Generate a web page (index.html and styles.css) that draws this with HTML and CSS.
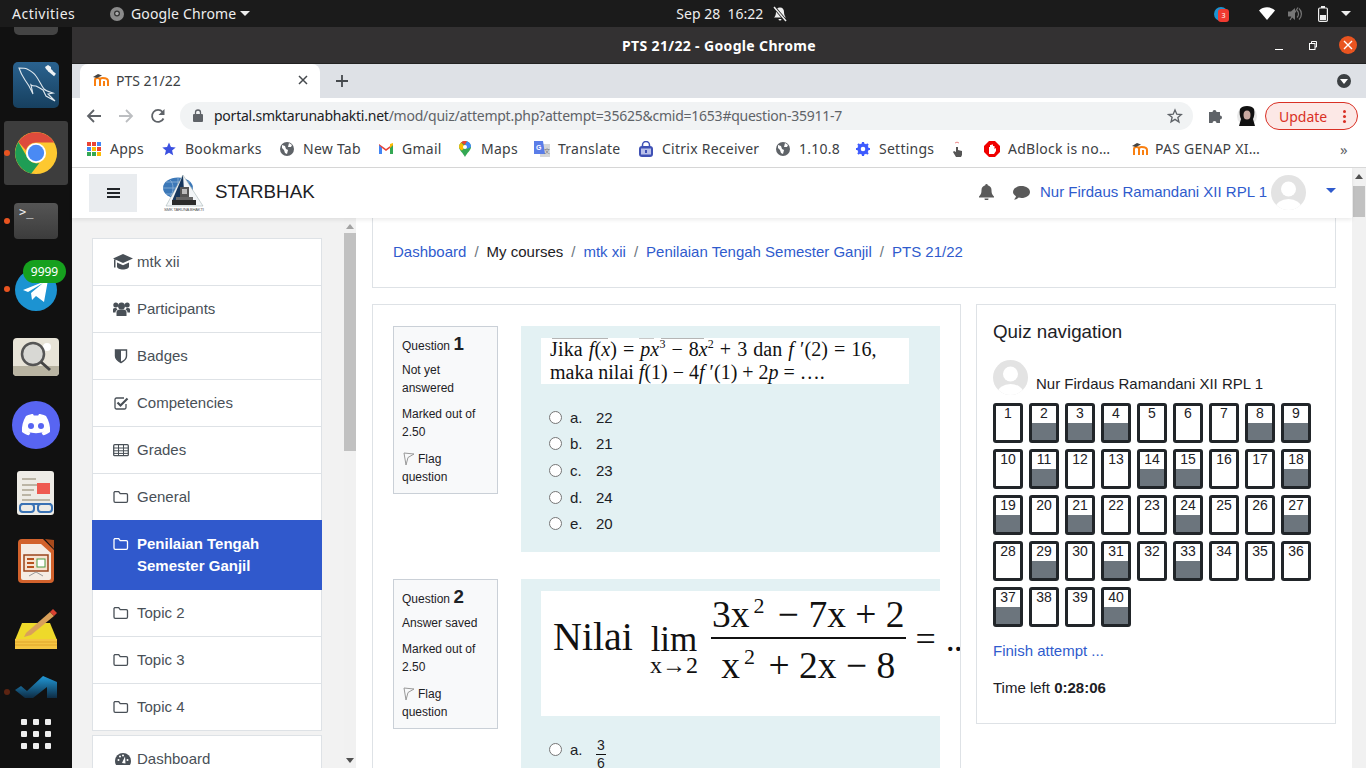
FILE: index.html

```html
<!DOCTYPE html>
<html lang="en">
<head>
    <meta charset="UTF-8">
    <title>PTS 21/22</title>
    <link rel="stylesheet" href="styles.css">
</head>
<body>

    <div class="topbar">
        <span class="activities">Activities</span>
        <span class="appmenu">
            <svg width="14" height="14" viewBox="0 0 14 14"><circle cx="7" cy="7" r="7" fill="#8a8a8a"/><circle cx="7" cy="6.5" r="3" fill="#333"/><circle cx="7" cy="6.5" r="1.7" fill="#aaa"/></svg>
            Google Chrome
            <i class="caret-white"></i>
        </span>
        <span class="clock">Sep 28&nbsp; 16:22</span>
        <svg class="bell-off" width="16" height="16" viewBox="0 0 16 16"><path d="M8 1.500c-2.600 0-4 2-4 4.500 0 3-1 4.500-2 5.500h12c-1-1-2-2.500-2-5.500 0-2.500-1.400-4.500-4-4.500z M6.500 13h3a1.500 1.500 0 0 1-3 0z" fill="#eee"/><path d="M2 1l12 14" stroke="#1b1b1b" stroke-width="3"/><path d="M2 1l12 14" stroke="#eee" stroke-width="1.500"/></svg>
        <div class="tray">
            <span class="tray-badge"><b></b><em>3</em></span>
            <svg class="tray-wifi" width="16" height="13" viewBox="0 0 16 13"><path d="M0 3.500C4.500-.8 11.500-.8 16 3.500L8 13z" fill="#fff"/></svg>
            <svg class="tray-vol" width="15" height="14" viewBox="0 0 15 14"><path d="M0 4.500h3L7 1v12L3 9.500H0z" fill="#777"/><path d="M9 3.500c2 1.800 2 5.200 0 7M11 1.500c3.200 3 3.200 8 0 11" stroke="#777" fill="none" stroke-width="1.200"/><path d="M10 .5L2 13" stroke="#777" stroke-width="1.200"/></svg>
            <svg class="tray-bat" width="10" height="16" viewBox="0 0 10 16"><rect x=".6" y="2" width="8.800" height="13.400" rx="1.200" fill="none" stroke="#eee" stroke-width="1.200"/><rect x="3" y="0" width="4" height="2" fill="#eee"/><rect x="2" y="9" width="6" height="5" fill="#eee"/></svg>
            <i class="caret-white"></i>
        </div>
    </div>

    <div class="desktop">

        <div class="dock">
            <div class="dock-first"><span></span></div>
            <div class="dock-item">
                <svg width="46" height="46" viewBox="0 0 46 46"><defs><linearGradient id="mysqlBg" x1="0" y1="0" x2="0" y2="1"><stop offset="0" stop-color="#2a628f"/><stop offset="1" stop-color="#17405f"/></linearGradient></defs><rect width="46" height="46" rx="5" fill="url(#mysqlBg)"/><path d="M6 6c3 0 6 0 8 1 4 2 7 4 9 7 3 4 5 9 8 13 2 2 6 3 9 4l-5 1 7 7-9-5-3-6c-3-2-5-3-7-4-2 0-4 0-5-1l2 9-4-8-4-6C8 12 7 9 6 6z" fill="none" stroke="#dfe8ee" stroke-width="1.100"/><path d="M36 8l6 5" stroke="#eef2f5" stroke-width="3"/><path d="M32 5l3-2 3 2 0 2 2 2-4 1-3-3z" fill="#eef2f5"/></svg>
            </div>
            <div class="dock-item active">
                <i class="dot"></i>
                <svg width="46" height="46" viewBox="0 0 48 48"><circle cx="24" cy="24" r="22" fill="#fdc830"/><path d="M5.600 12.400A22 22 0 0 1 43 13H24a11 11 0 0 0-10.500 8z" fill="#dd4b3c"/><path d="M5.600 12.400L14.500 28a11 11 0 0 0 13 6.500L19 45.500A22 22 0 0 1 5.600 12.400z" fill="#1f9d55"/><circle cx="24" cy="24" r="10.500" fill="#fff"/><circle cx="24" cy="24" r="8.500" fill="#4a8af4"/></svg>
            </div>
            <div class="dock-item">
                <i class="dot"></i>
                <span class="term">&gt;_</span>
            </div>
            <div class="dock-item">
                <i class="dot"></i>
                <svg class="tele" width="42" height="42" viewBox="0 0 42 42"><circle cx="21" cy="21" r="21" fill="#1c93d2"/><path d="M8 21l25-10-4 22-8-6-4 4-1-7 12-10-15 9z" fill="#fff"/></svg>
                <span class="count">9999</span>
            </div>
            <div class="dock-item">
                <svg width="46" height="38" viewBox="0 0 46 38"><rect width="46" height="38" rx="4" fill="#e8e4d8"/><path d="M0 28h46v6a4 4 0 0 1-4 4H4a4 4 0 0 1-4-4z" fill="#b9b4a2"/><circle cx="34" cy="9" r="4" fill="#fff"/><circle cx="20" cy="16" r="11" fill="#d8d8d4" stroke="#555" stroke-width="2.500"/><path d="M28 24l9 8" stroke="#444" stroke-width="3"/></svg>
            </div>
            <div class="dock-item">
                <svg width="48" height="48" viewBox="0 0 48 48"><circle cx="24" cy="24" r="24" fill="#5865f2"/><path d="M14 15c3-1.500 6-2 7-2l.8 1.500h4.400L27 13c1 0 4 .5 7 2 3 5 4.500 10 4 16-2.500 2-5 3-7 3.300l-1.500-2.500 2.500-1.300c-5 2.300-11 2.300-16 0l2.500 1.300-1.500 2.500c-2-.3-4.500-1.300-7-3.300-.5-6 1-11 4-16z" fill="#fff"/><circle cx="19" cy="25" r="3" fill="#5865f2"/><circle cx="29" cy="25" r="3" fill="#5865f2"/></svg>
            </div>
            <div class="dock-item">
                <svg width="38" height="44" viewBox="0 0 38 44"><rect width="37" height="44" rx="3" fill="#eeece6"/><path d="M5 8h14M5 14h28M5 19h12M5 24h9M5 29h28" stroke="#bbb5a5" stroke-width="2"/><rect x="20" y="12" width="13" height="11" fill="#ee5a50"/><path d="M4 33h30" stroke="#3a72b4" stroke-width="2"/><rect x="3" y="33" width="14" height="8" rx="3" fill="none" stroke="#3a72b4" stroke-width="2"/><rect x="21" y="33" width="14" height="8" rx="3" fill="none" stroke="#3a72b4" stroke-width="2"/></svg>
            </div>
            <div class="dock-item">
                <svg width="38" height="46" viewBox="0 0 38 46"><path d="M5 1h21l11 11v29a4 4 0 0 1-4 4H5a4 4 0 0 1-4-4V5a4 4 0 0 1 4-4z" fill="#d2622c"/><path d="M4 6h20l10 9v25a2 2 0 0 1-2 2H6a2 2 0 0 1-2-2z" fill="#f5ece4"/><path d="M28 1l9 10V2z" fill="#a84a1c"/><rect x="7" y="17" width="24" height="16" fill="#f7e3d2" stroke="#9a451c" stroke-width="1.500"/><path d="M10 21h7M10 25h7M10 29h7" stroke="#b7521f" stroke-width="2"/><rect x="20" y="21" width="8" height="8" fill="#fff" stroke="#4a9a3f"/><path d="M12 38l7-4 7 4" stroke="#999" fill="none"/></svg>
            </div>
            <div class="dock-item">
                <svg width="42" height="40" viewBox="0 0 42 40"><path d="M7 14h28l7 17H0z" fill="#eed92a"/><path d="M0 30h42v10H0z" fill="#f5c542"/><path d="M0 33h42M0 36h42" stroke="#e0a52a"/><path d="M11 24L35 3l4 4-23 19-7 2z" fill="#d9a05a"/><path d="M35 3l3-3 4 4-3 3z" fill="#d94030"/></svg>
            </div>
            <div class="dock-item dock-code">
                <i class="dot dim"></i>
                <svg width="42" height="22" viewBox="0 0 42 22"><defs><linearGradient id="codeBg" x1="0" y1="0" x2="0" y2="1"><stop offset="0" stop-color="#2199d8"/><stop offset="1" stop-color="#0e2c44"/></linearGradient></defs><path d="M0 14l6-4 6 5L28 0l14 6v16H32V11L18 22H10z" fill="url(#codeBg)"/></svg>
            </div>
            <div class="dock-grid">
                <i></i><i></i><i></i><i></i><i></i><i></i><i></i><i></i><i></i>
            </div>
        </div>

        <div class="chrome">
            <div class="titlebar">
                <span class="title-text">PTS 21/22 - Google Chrome</span>
                <div class="window-btns">
                    <i class="win-min"></i>
                    <svg class="win-max" width="8" height="9" viewBox="0 0 8 9"><path d="M2.500 2V.5h5v5.500H6" fill="none" stroke="#fff"/><rect x=".5" y="2.500" width="5.500" height="6" fill="none" stroke="#fff"/></svg>
                    <span class="win-close">
                        <svg width="10" height="10" viewBox="0 0 10 10"><path d="M1 1l8 8M9 1l-8 8" stroke="#fff" stroke-width="1.400"/></svg>
                    </span>
                </div>
            </div>

            <div class="tabstrip">
                <div class="tab">
                    <svg class="moodle-m" width="16" height="14" viewBox="0 0 16 14"><path d="M2 13V7c0-1.500 1-2 2.500-2S7 5.500 7 7v6M7 7c0-1.500 1-2 2.500-2S15 5 15 8v5M11 8v5" fill="none" stroke="#f98012" stroke-width="2"/><path d="M0 4l5-3 4 1.500L4 5z" fill="#444"/></svg>
                    <span class="tab-title">PTS 21/22</span>
                    <svg class="tab-x" width="10" height="10" viewBox="0 0 10 10"><path d="M1 1l8 8M9 1l-8 8" stroke="#45494d" stroke-width="1.500"/></svg>
                </div>
                <svg class="tab-plus" width="12" height="12" viewBox="0 0 12 12"><path d="M6 0v12M0 6h12" stroke="#45494d" stroke-width="1.800"/></svg>
                <span class="tab-search"><i></i></span>
            </div>

            <div class="toolbar">
                <svg class="tool" width="16" height="16" viewBox="0 0 16 16"><path d="M15 8H2M8 2L2 8l6 6" fill="none" stroke="#5f6368" stroke-width="1.800"/></svg>
                <svg class="tool" width="16" height="16" viewBox="0 0 16 16"><path d="M1 8h13M8 2l6 6-6 6" fill="none" stroke="#bcbec1" stroke-width="1.800"/></svg>
                <svg class="tool" width="16" height="16" viewBox="0 0 16 16"><path d="M13.500 10.500A6 6 0 1 1 12.600 4" fill="none" stroke="#5f6368" stroke-width="1.800"/><path d="M14.500 1v6h-6z" fill="#5f6368"/></svg>
                <div class="omnibox">
                    <svg width="10" height="13" viewBox="0 0 10 13"><rect y="5" width="10" height="8" rx="1" fill="#5f6368"/><path d="M2.500 5V3.500a2.500 2.500 0 0 1 5 0V5" fill="none" stroke="#5f6368" stroke-width="1.300"/></svg>
                    <span class="url"><b>portal.smktarunabhakti.net</b>/mod/quiz/attempt.php?attempt=35625&amp;cmid=1653#question-35911-7</span>
                    <svg class="url-star" width="16" height="16" viewBox="0 0 24 24"><path d="M12 3l2.700 6.300 6.800.6-5.200 4.500 1.600 6.700L12 17l-5.900 3.600 1.600-6.700L2.500 9.900l6.800-.6z" fill="none" stroke="#5f6368" stroke-width="2"/></svg>
                </div>
                <svg class="puzzle" width="16" height="16" viewBox="0 0 16 16"><path d="M1 5h3.500a2 2 0 0 1 4 0H12v3.500a2 2 0 0 1 0 4V16H8.500a2 2 0 0 0-4 0H1z" transform="translate(0 -1)" fill="#5f6368"/></svg>
                <svg class="profile" width="20" height="22" viewBox="0 0 20 22"><circle cx="10" cy="11" r="10" fill="#e8e8e8"/><path d="M3 4c2-4 12-4 14 0 1 4 0 8-1 10l2 7H2l2-7C3 12 2 8 3 4z" fill="#111"/><ellipse cx="10" cy="10" rx="3.500" ry="4.500" fill="#c9a9a0"/></svg>
                <span class="update">Update<i class="dots"></i></span>
            </div>

            <div class="bookmarks">
                <span class="bm bm-apps">
                    <svg width="14" height="14" viewBox="0 0 14 14"><rect width="4" height="4" fill="#ea4335"/><rect x="5" width="4" height="4" fill="#ea4335"/><rect x="10" width="4" height="4" fill="#4285f4"/><rect y="5" width="4" height="4" fill="#4285f4"/><rect x="5" y="5" width="4" height="4" fill="#fbbc04"/><rect x="10" y="5" width="4" height="4" fill="#ea4335"/><rect y="10" width="4" height="4" fill="#34a853"/><rect x="5" y="10" width="4" height="4" fill="#34a853"/><rect x="10" y="10" width="4" height="4" fill="#fbbc04"/></svg>
                    Apps
                </span>
                <span class="bm bm-book">
                    <svg width="14" height="14" viewBox="0 0 24 24"><path d="M12 1l3.300 7.500 8.200.8-6.200 5.400 1.900 8L12 18.500 4.800 22.700l1.900-8L.5 9.300l8.200-.8z" fill="#3b50e0"/></svg>
                    Bookmarks
                </span>
                <span class="bm bm-newtab">
                    <svg width="14" height="14" viewBox="0 0 14 14"><circle cx="7" cy="7" r="7" fill="#5f6368"/><path d="M2 3l3 1 1 3 2 1-1 4-2-1-1-3-2-2zM9 1l3 2-1 2H8z" fill="#fff"/></svg>
                    New Tab
                </span>
                <span class="bm bm-gmail">
                    <svg width="14" height="11" viewBox="0 0 14 11"><path d="M0 11V1l7 5 7-5v10h-3V5L7 8 3 5v6z" fill="#ea4335"/><path d="M0 11V2l3 3v6z" fill="#4285f4"/><path d="M14 11V2l-3 3v6z" fill="#34a853"/><path d="M11 1l3-1v2l-3 3z" fill="#fbbc04"/></svg>
                    Gmail
                </span>
                <span class="bm bm-maps">
                    <svg width="12" height="16" viewBox="0 0 12 16"><path d="M6 16C4 12 0 9 0 6a6 6 0 0 1 12 0c0 3-4 6-6 10z" fill="#34a853"/><path d="M0 6a6 6 0 0 1 2-4.500L6 6 3 9.500C1 8.500 0 7 0 6z" fill="#fbbc04"/><path d="M2 1.500A6 6 0 0 1 8 .300L6 4z" fill="#ea4335"/><path d="M8 .300A6 6 0 0 1 12 6L8 8 6 4z" fill="#4285f4"/><circle cx="6" cy="6" r="2" fill="#fff"/></svg>
                    Maps
                </span>
                <span class="bm bm-translate">
                    <svg width="16" height="16" viewBox="0 0 16 16"><rect x="6" y="3" width="10" height="13" fill="#d5d6d8"/><path d="M0 0h9l2 13H0z" fill="#5a7de8"/><text x="2" y="9" font-size="7" fill="#fff" font-family="Liberation Sans" font-weight="700">G</text><text x="10" y="12" font-size="6" fill="#777" font-family="Noto Sans CJK SC">文</text></svg>
                    Translate
                </span>
                <span class="bm bm-citrix">
                    <svg width="14" height="16" viewBox="0 0 14 16"><rect y="5" width="14" height="11" rx="3" fill="#3f51b5"/><path d="M3.500 6V4a3.500 3.500 0 0 1 7 0v2" fill="none" stroke="#3f51b5" stroke-width="1.500"/><rect x="2" y="7.500" width="10" height="6" fill="#b9c0ea"/><rect x="6" y="9" width="2" height="3" fill="#3f51b5"/></svg>
                    Citrix Receiver
                </span>
                <span class="bm bm-ver">
                    <svg width="14" height="14" viewBox="0 0 14 14"><circle cx="7" cy="7" r="7" fill="#5f6368"/><path d="M2 3l3 1 1 3 2 1-1 4-2-1-1-3-2-2zM9 1l3 2-1 2H8z" fill="#fff"/></svg>
                    1.10.8
                </span>
                <span class="bm bm-settings">
                    <svg width="14" height="14" viewBox="0 0 14 14"><circle cx="7" cy="7" r="4" fill="none" stroke="#3d5afe" stroke-width="3.400"/><path d="M7 0v3M7 11v3M0 7h3M11 7h3M2 2l2 2M10 10l2 2M12 2l-2 2M4 10l-2 2" stroke="#3d5afe" stroke-width="2.200"/></svg>
                    Settings
                </span>
                <span class="bm bm-touch">
                    <svg width="10" height="16" viewBox="0 0 10 16"><path d="M3 6h2v3l4 1v4l-1 2H3L0 11l1-1 2 1z" fill="#555"/><path d="M2 2a3 3 0 0 1 4 0" stroke="#e88" fill="none"/></svg>
                </span>
                <span class="bm bm-adblock">
                    <svg width="16" height="16" viewBox="0 0 16 16"><path d="M5 0h6l5 5v6l-5 5H5l-5-5V5z" fill="#f00000"/><path d="M5 13V6l1 0V4h1.500v-.5H9V5h1.500v3L12 7v3l-2 3z" fill="#fff"/></svg>
                    AdBlock is no…
                </span>
                <span class="bm bm-pas">
                    <svg class="moodle-m" width="16" height="14" viewBox="0 0 16 14"><path d="M2 13V7c0-1.500 1-2 2.500-2S7 5.500 7 7v6M7 7c0-1.500 1-2 2.500-2S15 5 15 8v5M11 8v5" fill="none" stroke="#f98012" stroke-width="2"/><path d="M0 4l5-3 4 1.500L4 5z" fill="#444"/></svg>
                    PAS GENAP XI…
                </span>
                <span class="bm-more">»</span>
            </div>

            <div class="page">
                <div class="page-view">
                    <nav class="navbar">
                        <span class="burger"><i></i></span>
                        <svg class="logo" width="42" height="38" viewBox="0 0 42 38"><ellipse cx="15" cy="14" rx="15" ry="10.500" fill="#3c78b8"/><path d="M7 6c4 3 4 13 0 16M15 4v20M23 6c-4 3-4 13 0 16M0 14h30M3 8h24M3 20h24" stroke="#a9c6e2" stroke-width=".6" fill="none"/><path d="M20 1L40 32H3z" fill="#f2f5f7" stroke="#9aa" stroke-width=".5"/><path d="M20 1L9 27h7l5-10z" fill="#16365c"/><rect x="17" y="13" width="9" height="10" fill="#555"/><rect x="19" y="15" width="5" height="5" fill="#bbb"/><rect x="13" y="23" width="17" height="3" fill="#666"/><rect x="9" y="26" width="24" height="5" fill="#2b2b2b"/><text x="1" y="36.500" font-size="4.200" fill="#555" font-family="Liberation Sans" textLength="40">SMK TARUNA BHAKTI</text></svg>
                        <span class="brand">STARBHAK</span>
                        <svg class="nav-bell" width="15" height="16" viewBox="0 0 15 16"><path d="M7.500 0a1.200 1.200 0 0 1 1.200 1.300C11 1.800 12.500 3.800 12.500 6c0 4 1.200 5 2.500 6.500V13.500H0V12.500C1.300 11 2.500 10 2.500 6c0-2.200 1.500-4.200 3.800-4.700A1.200 1.200 0 0 1 7.500 0zM5.500 14.500h4a2 2 0 0 1-4 0z" fill="#5a5a5a"/></svg>
                        <svg class="nav-chat" width="17" height="15" viewBox="0 0 17 15"><path d="M8.500 1C13 1 17 3.500 17 7s-4 6-8.500 6c-1 0-2-.1-2.800-.4C4.500 13.700 3 14.500 1 14.500c1-1 1.800-2.200 2-3.300C1.200 10 0 8.600 0 7c0-3.500 4-6 8.500-6z" fill="#5a5a5a"/></svg>
                        <a class="nav-user">Nur Firdaus Ramandani XII RPL 1</a>
                        <svg class="avatar" width="35" height="35" viewBox="0 0 35 35"><defs><clipPath id="avA"><circle cx="17.500" cy="17.500" r="17.500"/></clipPath></defs><circle cx="17.500" cy="17.500" r="17.500" fill="#e3e3e3"/><g clip-path="url(#avA)" fill="#fff"><circle cx="17.500" cy="14" r="7.500"/><ellipse cx="17.500" cy="33" rx="13" ry="9"/></g></svg>
                        <i class="nav-caret"></i>
                    </nav>

                    <div class="layout">
                        <aside class="sidebar">
                            <div class="side-scroll">
                                <ul class="side-list">
                                    <li>
                                        <svg class="ico" width="20" height="16" viewBox="0 0 20 16"><path d="M10 0L0 4.500 10 9l10-4.500zM4 8.500v4c0 2 3 3 6 3s6-1 6-3v-4l-6 2.700zM1 5.500v8h1.500v-8z" fill="#495057"/></svg>
                                        mtk xii
                                    </li>
                                    <li>
                                        <svg class="ico" width="17" height="16" viewBox="0 0 17 16"><circle cx="8.500" cy="5" r="3.500" fill="#495057"/><circle cx="2.800" cy="4" r="2.500" fill="#495057"/><circle cx="14.200" cy="4" r="2.500" fill="#495057"/><path d="M3.500 15V11c0-2 2-2.500 5-2.500s5 .5 5 2.500v4zM0 11.500V8.500c0-1 1-1.800 3.500-1.800 0 1 .5 1.500 1 2-1.500.5-2 1.500-2 2.800zM17 11.500V8.500c0-1-1-1.800-3.500-1.800 0 1-.5 1.500-1 2 1.500.5 2 1.500 2 2.800z" fill="#495057"/></svg>
                                        Participants
                                    </li>
                                    <li>
                                        <svg class="ico" width="16" height="16" viewBox="0 0 16 16"><path d="M2.500 2h11v6c0 3-2.500 5-5.500 6.500C5 13 2.500 11 2.500 8z" fill="none" stroke="#495057" stroke-width="1.400"/><path d="M2.500 2H8v12.500C5 13 2.500 11 2.500 8z" fill="#495057"/></svg>
                                        Badges
                                    </li>
                                    <li>
                                        <svg class="ico" width="16" height="16" viewBox="0 0 16 16"><path d="M13 9v3.500a1.500 1.500 0 0 1-1.500 1.500h-8A1.500 1.500 0 0 1 2 12.500v-8A1.500 1.500 0 0 1 3.500 3H11" fill="none" stroke="#495057" stroke-width="1.300"/><path d="M4.500 7.500L7.500 10.500 14.500 3.500" fill="none" stroke="#495057" stroke-width="2.200"/></svg>
                                        Competencies
                                    </li>
                                    <li>
                                        <svg class="ico" width="16" height="16" viewBox="0 0 16 16"><rect x=".7" y="2.700" width="14.600" height="11" rx="1" fill="none" stroke="#495057" stroke-width="1.300"/><path d="M1 6h14M1 8.800h14M1 11.400h14M5.500 3v10.500M10.500 3v10.500" stroke="#495057"/></svg>
                                        Grades
                                    </li>
                                    <li>
                                        <svg class="ico" width="16" height="16" viewBox="0 0 16 16"><use href="#folder"/></svg>
                                        General
                                    </li>
                                    <li class="active">
                                        <svg class="ico" width="16" height="16" viewBox="0 0 16 16"><use href="#folder"/></svg>
                                        <span>Penilaian Tengah Semester Ganjil</span>
                                    </li>
                                    <li>
                                        <svg class="ico" width="16" height="16" viewBox="0 0 16 16"><use href="#folder"/></svg>
                                        Topic 2
                                    </li>
                                    <li>
                                        <svg class="ico" width="16" height="16" viewBox="0 0 16 16"><use href="#folder"/></svg>
                                        Topic 3
                                    </li>
                                    <li>
                                        <svg class="ico" width="16" height="16" viewBox="0 0 16 16"><use href="#folder"/></svg>
                                        Topic 4
                                    </li>
                                </ul>
                                <ul class="side-list">
                                    <li>
                                        <svg class="ico" width="16" height="16" viewBox="0 0 16 16"><path d="M8 2a8 8 0 0 0-8 8c0 1.500.4 3 1.100 4h13.800c.7-1 1.100-2.500 1.100-4a8 8 0 0 0-8-8z" fill="#495057"/><circle cx="3.500" cy="9" r="1" fill="#fff"/><circle cx="5" cy="5.500" r="1" fill="#fff"/><circle cx="8" cy="4.500" r="1" fill="#fff"/><circle cx="12.500" cy="9" r="1" fill="#fff"/><path d="M7 12l3-6.500 .5 7z" fill="#fff"/></svg>
                                        Dashboard
                                    </li>
                                </ul>
                            </div>
                            <div class="scrollbar side-bar">
                                <i class="arrow-up"></i>
                                <span class="thumb"></span>
                                <i class="arrow-down"></i>
                            </div>
                        </aside>

                        <main class="main">
                            <div class="breadcrumb-card">
                                <a>Dashboard</a><span class="sep">/</span><span>My courses</span><span class="sep">/</span><a>mtk xii</a><span class="sep">/</span><a>Penilaian Tengah Semester Ganjil</a><span class="sep">/</span><a>PTS 21/22</a>
                            </div>
                            <div class="columns">
                                <section class="quiz-card">
                                    <div class="que">
                                        <div class="que-info">
                                            <h3>Question <b>1</b></h3>
                                            <p>Not yet answered</p>
                                            <p>Marked out of 2.50</p>
                                            <p><svg class="flag" width="12" height="14" viewBox="0 0 12 14"><path d="M2 1l10 1-6 3.500L4 13z" fill="none" stroke="#999"/></svg>Flag question</p>
                                        </div>
                                        <div class="que-body">
                                            <div class="scan scan-one">
                                                <div class="line-wide">Jika <i>f</i>(<i>x</i>) = <i>px</i><sup>3</sup> − 8<i>x</i><sup>2</sup> + 3 dan <i>f</i> ′(2) = 16,</div>
                                                <div>maka nilai <i>f</i>(1) − 4<i>f</i> ′(1) + 2<i>p</i> = ….</div>
                                            </div>
                                            <label class="opt"><i class="radio"></i><span class="letter">a.</span>22</label>
                                            <label class="opt"><i class="radio"></i><span class="letter">b.</span>21</label>
                                            <label class="opt"><i class="radio"></i><span class="letter">c.</span>23</label>
                                            <label class="opt"><i class="radio"></i><span class="letter">d.</span>24</label>
                                            <label class="opt"><i class="radio"></i><span class="letter">e.</span>20</label>
                                        </div>
                                    </div>
                                    <div class="que">
                                        <div class="que-info">
                                            <h3>Question <b>2</b></h3>
                                            <p>Answer saved</p>
                                            <p>Marked out of 2.50</p>
                                            <p><svg class="flag" width="12" height="14" viewBox="0 0 12 14"><path d="M2 1l10 1-6 3.500L4 13z" fill="none" stroke="#999"/></svg>Flag question</p>
                                        </div>
                                        <div class="que-body">
                                            <div class="scan scan-two">
                                                <span class="nilai">Nilai</span>
                                                <span class="lim">lim<small>x→2</small></span>
                                                <span class="frac">
                                                    <span class="num">3x<sup>2</sup> − 7x + 2</span>
                                                    <span class="den">x<sup>2</sup> + 2x − 8</span>
                                                </span>
                                                <span class="eq">=<span class="eq-dots">..</span></span>
                                            </div>
                                            <label class="opt"><i class="radio"></i><span class="letter">a.</span><span class="small-frac"><span>3</span><span>6</span></span></label>
                                        </div>
                                    </div>
                                </section>

                                <section class="nav-card">
                                    <h4>Quiz navigation</h4>
                                    <div class="nav-person">
                                        <svg class="avatar" width="35" height="35" viewBox="0 0 35 35"><defs><clipPath id="avB"><circle cx="17.500" cy="17.500" r="17.500"/></clipPath></defs><circle cx="17.500" cy="17.500" r="17.500" fill="#e3e3e3"/><g clip-path="url(#avB)" fill="#fff"><circle cx="17.500" cy="14" r="7.500"/><ellipse cx="17.500" cy="33" rx="13" ry="9"/></g></svg>
                                        <span>Nur Firdaus Ramandani XII RPL 1</span>
                                    </div>
                                    <div class="qn-grid">
                                        <a class="qn">1</a><a class="qn done">2</a><a class="qn done">3</a><a class="qn done">4</a><a class="qn">5</a><a class="qn">6</a><a class="qn">7</a><a class="qn done">8</a><a class="qn done">9</a>
                                        <a class="qn">10</a><a class="qn done">11</a><a class="qn">12</a><a class="qn">13</a><a class="qn done">14</a><a class="qn done">15</a><a class="qn">16</a><a class="qn">17</a><a class="qn done">18</a>
                                        <a class="qn done">19</a><a class="qn">20</a><a class="qn done">21</a><a class="qn">22</a><a class="qn">23</a><a class="qn done">24</a><a class="qn">25</a><a class="qn">26</a><a class="qn done">27</a>
                                        <a class="qn">28</a><a class="qn done">29</a><a class="qn">30</a><a class="qn done">31</a><a class="qn">32</a><a class="qn done">33</a><a class="qn">34</a><a class="qn">35</a><a class="qn">36</a>
                                        <a class="qn done">37</a><a class="qn">38</a><a class="qn">39</a><a class="qn done">40</a>
                                    </div>
                                    <a class="finish">Finish attempt ...</a>
                                    <div class="time-left">Time left <b>0:28:06</b></div>
                                </section>
                            </div>
                        </main>
                    </div>
                </div>
                <div class="scrollbar page-bar">
                    <i class="arrow-up"></i>
                    <span class="thumb"></span>
                </div>
            </div>
        </div>
    </div>

    <svg width="0" height="0" class="defs">
        <symbol id="folder" viewBox="0 0 16 16">
            <path d="M1.700 2.700h4l1.500 2h6.100a1.200 1.200 0 0 1 1.200 1.200v6.200a1.200 1.200 0 0 1-1.200 1.200H2.200A1.200 1.200 0 0 1 1 12.100V3.400z" fill="none" stroke="currentColor" stroke-width="1.300"/>
        </symbol>
    </svg>

</body>
</html>
```

FILE: styles.css

```css
* { box-sizing: border-box; }
html, body { height: 100%; }
body {
    margin: 0;
    width: 1366px;
    height: 768px;
    overflow: hidden;
    display: flex;
    flex-direction: column;
    background: #111;
    font-family: "Liberation Sans", Arial, sans-serif;
    font-size: 15px;
    color: #1d2125;
}
svg { display: block; flex: none; }
.defs { position: absolute; }

/* ubuntu top bar */
.topbar {
    height: 27px;
    flex: none;
    display: flex;
    align-items: center;
    background: #1b1b1b;
    color: #eee;
    font-family: "Noto Sans", sans-serif;
    font-size: 14px;
    position: relative;
}
.activities { margin-left: 12px; width: 98px; letter-spacing: .5px; }
.appmenu { display: flex; align-items: center; gap: 7px; letter-spacing: .15px; }
.caret-white {
    display: inline-block;
    border: 5px solid transparent;
    border-top: 5px solid #eee;
    border-bottom: 0;
}
.appmenu .caret-white { margin-left: -3px; }
.clock { margin-left: 426px; }
.bell-off { margin-left: 9px; }
.tray { margin-left: auto; display: flex; align-items: center; padding-right: 15px; }
.tray-badge { position: relative; width: 14px; height: 14px; border-radius: 50%; background: #1c93d2; margin-right: 31px; }
.tray-badge em {
    position: absolute;
    left: 4px;
    top: 2px;
    width: 11px;
    height: 13px;
    border-radius: 3px;
    background: #f03a30;
    color: #fff;
    font-size: 7px;
    font-style: normal;
    line-height: 13px;
    text-align: center;
}
.tray-wifi { margin-right: 13px; }
.tray-vol { margin-right: 15px; }
.tray-bat { margin-right: 13px; }

/* dock */
.desktop { flex: 1; display: flex; min-height: 0; }
.dock {
    width: 72px;
    flex: none;
    background: #111;
    display: flex;
    flex-direction: column;
    overflow: hidden;
}
.dock-first { height: 24px; flex: none; overflow: hidden; position: relative; }
.dock-first span {
    position: absolute;
    left: 14px;
    top: -20px;
    width: 44px;
    height: 28px;
    border-radius: 5px;
    background: #444;
}
.dock-item {
    height: 68px;
    flex: none;
    display: flex;
    align-items: center;
    justify-content: center;
    position: relative;
}
.dock-item.active::before {
    content: "";
    position: absolute;
    left: 4px;
    right: 4px;
    top: 2px;
    bottom: 2px;
    border-radius: 3px;
    background: #3d3d3d;
}
.dock-item svg { position: relative; }
.dock-code { margin-top: -5px; }
.dock-code svg { margin-top: -10px; }
.dot {
    position: absolute;
    left: 4px;
    top: 31px;
    width: 6px;
    height: 6px;
    border-radius: 50%;
    background: #e95420;
}
.dot.dim { background: #5c2412; }
.term {
    width: 44px;
    height: 36px;
    border-radius: 4px;
    background: linear-gradient(#555, #3c3c3c);
    color: #eee;
    font-family: "DejaVu Sans Mono", monospace;
    font-size: 12px;
    padding: 2px 0 0 5px;
}
.count {
    position: absolute;
    left: 23px;
    top: 5px;
    height: 23px;
    width: 43px;
    border-radius: 12px;
    background: #16a01e;
    color: #fff;
    font-family: "Noto Sans", sans-serif;
    font-size: 12px;
    line-height: 23px;
    text-align: center;
}
.tele { margin-top: 2px; }
.dock-grid {
    margin: -7px auto 0;
    width: 30px;
    display: grid;
    grid-template-columns: repeat(3, 6px);
    gap: 6px;
}
.dock-grid i { width: 6px; height: 6px; border-radius: 1px; background: #eee; }

/* chrome frame */
.chrome { flex: 1; display: flex; flex-direction: column; min-width: 0; background: #fff; }
.titlebar {
    height: 37px;
    flex: none;
    position: relative;
    background: #333132;
    border-bottom: 1px solid #222;
    color: #fff;
    font-family: "Noto Sans", sans-serif;
    font-size: 14px;
    font-weight: 700;
    letter-spacing: .35px;
    text-align: center;
    line-height: 37px;
}
.window-btns { position: absolute; right: 9px; top: 9px; display: flex; align-items: center; }
.win-min { width: 8px; height: 1px; background: #fff; margin-right: 26px; margin-top: 9px; }
.win-max { margin-right: 22px; }
.win-close {
    width: 18px;
    height: 18px;
    border-radius: 50%;
    background: #e95420;
    display: flex;
    align-items: center;
    justify-content: center;
}
.tabstrip {
    height: 34px;
    flex: none;
    display: flex;
    align-items: center;
    background: #dee1e6;
    padding-left: 8px;
}
.tab {
    width: 240px;
    height: 34px;
    background: #fff;
    border-radius: 8px 8px 0 0;
    display: flex;
    align-items: center;
    padding: 0 12px 2px 13px;
    font-family: "Noto Sans", sans-serif;
    font-size: 14px;
    color: #3c4043;
}
.tab-title { margin-left: 7px; }
.tab-x { margin-left: auto; margin-right: 0; }
.tab-plus { margin-left: 16px; }
.tab-search {
    margin-left: auto;
    margin-right: 15px;
    width: 14px;
    height: 14px;
    border-radius: 50%;
    background: #3c4043;
    display: flex;
    align-items: center;
    justify-content: center;
}
.tab-search i { border: 4px solid transparent; border-top: 5px solid #fff; border-bottom: 0; }

.toolbar {
    height: 35px;
    flex: none;
    display: flex;
    align-items: center;
    padding-left: 14px;
    background: #fff;
}
.tool { margin-right: 16px; }
.omnibox {
    width: 1013px;
    height: 28px;
    margin-left: -2px;
    border-radius: 14px;
    background: #f1f3f4;
    display: flex;
    align-items: center;
    padding: 0 10px 0 13px;
    font-family: "Noto Sans", sans-serif;
    font-size: 14px;
    letter-spacing: -.24px;
}
.url { margin-left: 11px; color: #5f6368; white-space: nowrap; }
.url b { font-weight: 400; color: #202124; }
.url-star { margin-left: auto; }
.puzzle { margin-left: 15px; }
.profile { margin-left: 13px; }
.update {
    margin-left: 8px;
    width: 93px;
    height: 28px;
    border: 1px solid #d93025;
    border-radius: 14px;
    background: #fce8e6;
    color: #d93025;
    font-family: "Noto Sans", sans-serif;
    font-size: 14px;
    line-height: 27px;
    padding-left: 13px;
    position: relative;
}
.dots {
    position: absolute;
    right: 11px;
    top: 7px;
    width: 3px;
    height: 3px;
    border-radius: 50%;
    background: #d93025;
    box-shadow: 0 5px 0 #d93025, 0 10px 0 #d93025;
}
.bookmarks {
    height: 35px;
    flex: none;
    display: flex;
    align-items: center;
    background: #fff;
    border-bottom: 1px solid #d8d8d8;
    padding: 0 0 3px 15px;
    font-family: "Noto Sans", sans-serif;
    font-size: 14px;
    letter-spacing: .25px;
    color: #3c4043;
    white-space: nowrap;
}
.bm { display: flex; align-items: center; gap: 9px; flex: none; }
.bm-apps { width: 75px; }
.bm-book { width: 118px; }
.bm-newtab { width: 99px; }
.bm-gmail { width: 80px; }
.bm-maps { width: 75px; gap: 10px; }
.bm-translate { width: 105px; gap: 8px; }
.bm-citrix { width: 137px; }
.bm-ver { width: 80px; }
.bm-settings { width: 97px; }
.bm-touch { width: 31px; }
.bm-adblock { width: 148px; gap: 8px; }
.bm-pas { gap: 7px; }
.bm-more { margin-left: 80px; font-size: 15px; color: #5f6368; }

/* the web page */
.page { flex: 1; min-height: 0; display: flex; background: #fff; }
.page-view { flex: 1; min-width: 0; display: flex; flex-direction: column; }
.scrollbar { background: #f1f1f1; position: relative; flex: none; }
.thumb { position: absolute; left: 0; right: 0; background: #c1c1c1; }
.arrow-up, .arrow-down { position: absolute; border: 4px solid transparent; }
.arrow-up { border-bottom: 5px solid #a3a3a3; border-top: 0; }
.arrow-down { border-top: 5px solid #505050; border-bottom: 0; }
.page-bar { width: 14px; }
.page-bar .thumb { top: 18px; height: 31px; left: 1px; right: 1px; }
.page-bar .arrow-up { left: 3px; top: 6px; border-bottom-color: #505050; }

.navbar {
    height: 50px;
    flex: none;
    display: flex;
    align-items: center;
    background: #fff;
    box-shadow: 0 2px 4px rgba(0, 0, 0, 0.08);
    position: relative;
    z-index: 2;
}
.burger {
    margin-left: 17px;
    width: 48px;
    height: 38px;
    background: #e9ecef;
    display: flex;
    align-items: center;
    justify-content: center;
}
.burger i {
    width: 13px;
    height: 2px;
    background: #212529;
    box-shadow: 0 4px 0 #212529, 0 -4px 0 #212529;
}
.logo { margin-left: 26px; }
.brand { margin: 0 0 2px 10px; font-size: 18.75px; color: #1d2125; }
.nav-bell { margin-left: auto; margin-bottom: 2px; }
.nav-chat { margin-left: 19px; margin-bottom: 2px; }
.nav-user { margin: 0 0 3px 10px; color: #2f5bcd; white-space: nowrap; }
.nav-user + .avatar { margin-left: 4px; margin-bottom: 2px; }
.nav-caret {
    margin-left: 20px;
    margin-right: 16px;
    margin-bottom: 5px;
    border: 5px solid transparent;
    border-top: 5px solid #2f5bcd;
    border-bottom: 0;
}
.layout { flex: 1; min-height: 0; display: flex; overflow: hidden; }

/* course index */
.sidebar { width: 284px; flex: none; display: flex; background: #f2f2f2; }
.side-scroll { flex: 1; padding: 20px 22px 0 20px; overflow: hidden; }
.side-bar { width: 12px; }
.side-bar .thumb { top: 15px; height: 218px; }
.side-bar .arrow-up { left: 2px; top: 6px; }
.side-bar .arrow-down { left: 2px; bottom: 5px; }
.side-list {
    list-style: none;
    margin: 0 0 4px;
    padding: 0;
    background: #fff;
    border: 1px solid #dee2e6;
    border-bottom: 0;
    color: #495057;
}
.side-list li {
    display: flex;
    padding: 12px 20px;
    line-height: 22px;
    border-bottom: 1px solid #dee2e6;
}
.side-list .ico { margin: 3px 8px 0 0; width: 16px; color: #495057; }
.side-list li:first-child .ico { margin-left: 0; margin-right: 4px; width: 20px; }
.side-list li:nth-child(2) .ico { margin-right: 7px; width: 17px; }
.side-list li.active {
    background: #3059cc;
    color: #fff;
    font-weight: 700;
    margin: -1px -1px 0;
    padding: 13px 20px 12px 21px;
    border-bottom-color: #3059cc;
}
.side-list li.active .ico { color: #fff; }

/* main column */
.main { flex: 1; min-width: 0; padding: 0 16px; }
.breadcrumb-card {
    height: 70px;
    border: 1px solid #dee2e6;
    border-top: 0;
    padding: 23px 20px 0;
    line-height: 22px;
    white-space: nowrap;
}
.breadcrumb-card a { color: #2f5bcd; }
.breadcrumb-card .sep { color: #6c757d; margin: 0 8px; }
.columns { display: flex; gap: 15px; margin-top: 16px; align-items: flex-start; }
.quiz-card {
    width: 589px;
    flex: none;
    height: 480px;
    border: 1px solid #dee2e6;
    padding: 21px 0 0 20px;
    overflow: hidden;
}
.que { display: flex; gap: 23px; align-items: flex-start; margin-bottom: 27px; }
.que-info {
    width: 105px;
    flex: none;
    background: #f8f9fa;
    border: 1px solid #cad0d7;
    padding: 7px 8px;
    font-size: 12px;
    line-height: 18px;
    color: #1d2125;
}
.que-info h3 { margin: 0 0 5px; height: 22px; font-size: 12px; font-weight: 400; line-height: 20px; }
.que-info h3 b { font-size: 18.75px; line-height: 20px; }
.que-info p { margin: 0 0 8px; }
.que-info p:nth-child(3) { margin-bottom: 9px; }
.que-info p:last-child { margin-bottom: 0; }
.flag { display: inline-block; vertical-align: -3px; margin-right: 4px; }
.que-body {
    width: 419px;
    flex: none;
    background: #e3f1f3;
    padding: 12px 20px 15px;
    font-size: 15px;
}
.scan { background-color: #fff; color: #111; font-family: "Liberation Serif", serif; }
.scan-one {
    width: 368px;
    height: 46px;
    margin-bottom: 20px;
    padding-left: 9px;
    font-size: 20px;
    line-height: 23px;
    white-space: nowrap;
    background-image: linear-gradient(#b5b5b5, #b5b5b5), linear-gradient(#c8c8c8, #c8c8c8), linear-gradient(#b5b5b5, #b5b5b5);
    background-size: 56px 1px, 15px 1px, 43px 1px;
    background-position: 11px 0, 98px 0, 120px 0;
    background-repeat: no-repeat;
}
.scan-one sup { font-size: 12px; line-height: 0; }
.line-wide { word-spacing: .7px; letter-spacing: .15px; }
.scan-two {
    width: 440px;
    height: 125px;
    margin-bottom: 20px;
    padding: 0 0 26px 12px;
    display: flex;
    align-items: center;
    white-space: nowrap;
    font-size: 40px;
}
.nilai { margin-top: -8px; }
.lim {
    margin-left: 17px;
    margin-top: 19px;
    display: flex;
    flex-direction: column;
    align-items: center;
    font-size: 35px;
    line-height: 30px;
}
.lim small { font-size: 24px; line-height: 20px; }
.frac { margin-left: 13px; display: flex; flex-direction: column; align-items: center; font-size: 37.5px; line-height: 44px; }
.frac sup { font-size: 22px; line-height: 0; vertical-align: 14px; padding: 0 4px; }
.num { border-bottom: 2px solid #111; padding: 0 1px; }
.den { padding-top: 5px; }
.eq { margin: -3px 0 0 10px; font-size: 36px; }
.eq-dots { margin-left: 10px; letter-spacing: -1px; }
.opt { display: flex; align-items: center; height: 26.6px; color: #1d2125; }
.radio {
    width: 13px;
    height: 13px;
    flex: none;
    margin: 0 8px 0 8px;
    border-radius: 50%;
    background: #fff;
    border: 1px solid #767676;
}
.letter { width: 26px; }
.small-frac { display: flex; flex-direction: column; align-items: center; font-size: 14px; line-height: 17px; margin-top: 10px; }
.small-frac span:first-child { border-bottom: 1px solid #111; padding: 0 1px; }

/* quiz nav block */
.nav-card {
    flex: none;
    width: 360px;
    height: 420px;
    border: 1px solid #dee2e6;
    padding: 16px 16px 0;
}
.nav-card h4 { margin: 0; font-size: 18.75px; font-weight: 400; line-height: 22px; }
.nav-person { display: flex; align-items: flex-end; gap: 8px; margin-top: 17px; line-height: 22px; }
.qn-grid {
    display: grid;
    grid-template-columns: repeat(9, 30px);
    grid-auto-rows: 40px;
    gap: 6px;
    margin-top: 8px;
}
.qn {
    display: block;
    border: 3px solid #212529;
    border-radius: 3px;
    font-size: 14px;
    line-height: 15px;
    text-align: center;
    background: #fff;
}
.qn.done { background: linear-gradient(#fff 17px, #6c757d 17px); }
.finish { display: block; margin-top: 13px; color: #2f5bcd; line-height: 22px; }
.time-left { margin-top: 15px; line-height: 22px; }
```
